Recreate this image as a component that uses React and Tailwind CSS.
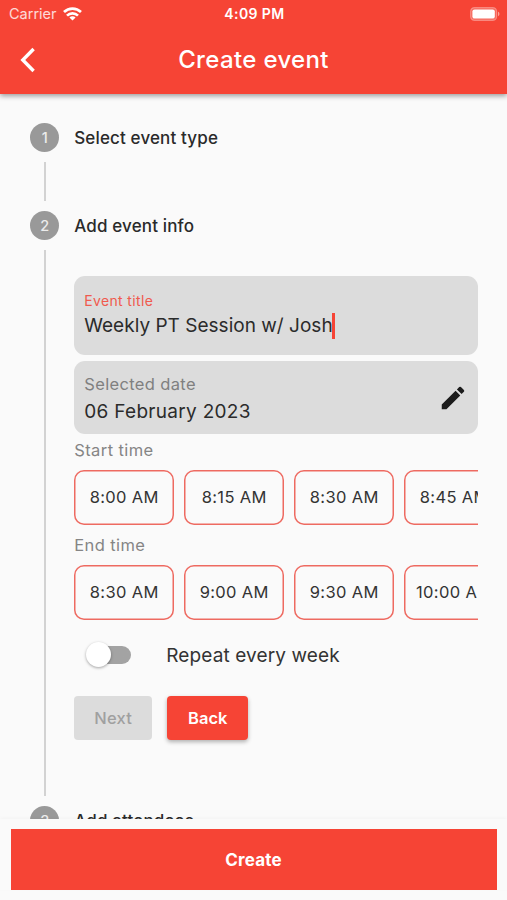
import { useState } from 'react'

const START_TIMES = ['8:00 AM', '8:15 AM', '8:30 AM', '8:45 AM']
const END_TIMES = ['8:30 AM', '9:00 AM', '9:30 AM', '10:00 AM']

function StatusBar() {
  return (
    <div className="grid h-[27px] grid-cols-3 items-center pr-[7px] pl-[9px] text-white">
      <div className="flex items-center gap-[6px]">
        <span className="text-[14.5px] text-white/80">Carrier</span>
        <svg width="19" height="14" viewBox="0 0 19 14" fill="none" stroke="currentColor" strokeWidth="2.7">
          <path d="M1 5C5.8 .4 13.2 .4 18 5" />
          <path d="M4 8.6C7 5.7 12 5.7 15 8.6" />
          <path d="M9.5 13.5L6.4 10.5C8.1 8.9 10.9 8.9 12.6 10.5Z" fill="currentColor" stroke="none" />
        </svg>
      </div>
      <span className="text-center text-[14px] font-semibold tracking-[0.4px]">4:09 PM</span>
      <svg className="justify-self-end" width="30" height="14" viewBox="0 0 30 14">
        <rect x=".6" y=".6" width="26" height="12.8" rx="3.8" fill="white" fillOpacity=".2" stroke="white" strokeOpacity=".3" strokeWidth="1.2" />
        <rect x="2.4" y="2.4" width="22.4" height="9.2" rx="2.2" fill="white" />
        <path d="M28 4.8C29.9 5.4 29.9 8.6 28 9.2Z" fill="white" fillOpacity=".5" />
      </svg>
    </div>
  )
}

function Header() {
  return (
    <header className="relative z-10 h-[94px] shrink-0 bg-[#f64435] shadow-[0_2px_5px_rgba(0,0,0,0.38)]">
      <StatusBar />
      <div className="grid h-[66px] grid-cols-[60px_1fr_60px] items-center">
        <button className="pl-[20px] text-white" aria-label="Go back">
          <svg width="16" height="26" viewBox="0 0 16 26" fill="none" stroke="currentColor" strokeWidth="3.4">
            <path d="M13.6 2L2.8 13L13.6 24" />
          </svg>
        </button>
        <h1 className="text-center text-[24px] font-medium tracking-[0.35px] text-white">Create event</h1>
      </div>
    </header>
  )
}

function Step({ number, title, lineClass, children }) {
  return (
    <section className="flex gap-[15px]">
      <div className="flex w-[29px] shrink-0 flex-col items-center">
        <span className="flex size-[29px] shrink-0 justify-center rounded-full bg-[#999] text-[14.5px] leading-[29px] font-medium text-[#ececec]">
          {number}
        </span>
        <span className={`my-[10px] ml-px w-[2px] shrink-0 bg-[#d2d2d2] ${lineClass}`} />
      </div>
      <div className="min-w-0 flex-1">
        <h2 className="h-[29px] pt-px text-[17px] leading-[29px] font-medium tracking-[0.14px] text-[#2a2a2a]">{title}</h2>
        {children}
      </div>
    </section>
  )
}

function TimeRow({ label, times }) {
  return (
    <div>
      <p className="h-[35px] pt-[3px] text-[16.5px] leading-[24px] tracking-[0.4px] text-[#858585]">{label}</p>
      <div className="flex gap-[10px] overflow-hidden">
        {times.map((time) => (
          <button
            key={time}
            className="h-[55px] w-[100px] shrink-0 rounded-[10px] text-[16.5px] tracking-[0.35px] whitespace-nowrap text-[#333] shadow-[inset_0_0_0_1.5px_#ee6a61]"
          >
            {time}
          </button>
        ))}
      </div>
    </div>
  )
}

function EventForm() {
  const [repeat, setRepeat] = useState(false)

  return (
    <div className="pt-[36px]">
      <div className="h-[79px] rounded-[11px] bg-[#dcdcdc] px-[10px] pt-[16px]">
        <p className="text-[14px] leading-[18px] tracking-[0.35px] text-[#f05a4e]">Event title</p>
        <p className="flex items-center pt-px text-[19px] leading-[30px] tracking-[0.02px] text-[#2b2b2b]">
          Weekly PT Session w/ Josh
          <span className="-ml-px h-[26px] w-[3px] bg-[#f64435]" />
        </p>
      </div>
      <div className="mt-[6px] flex h-[73px] items-center justify-between rounded-[11px] bg-[#dcdcdc] pr-[10px] pl-[10px]">
        <div>
          <p className="text-[16.5px] leading-[27px] tracking-[0.35px] text-[#808080]">Selected date</p>
          <p className="text-[19px] leading-[27px] tracking-[0.3px] text-[#2b2b2b]">06 February 2023</p>
        </div>
        <svg width="30" height="30" viewBox="0 0 24 24" fill="#1c1c1c">
          <path d="M3 17.250V21h3.750L17.810 9.940l-3.750-3.750L3 17.250zM20.710 7.040a1 1 0 0 0 0-1.410l-2.340-2.340a1 1 0 0 0-1.410 0l-1.830 1.830 3.750 3.750 1.830-1.830z" />
        </svg>
      </div>
      <div className="mt-[1px] flex flex-col gap-[5px]">
        <TimeRow label="Start time" times={START_TIMES} />
        <TimeRow label="End time" times={END_TIMES} />
      </div>
      <div className="mt-[22px] flex h-[26px] items-center gap-[35px] pl-[12px]">
        <button
          role="switch"
          aria-checked={repeat}
          aria-label="Repeat every week"
          onClick={() => setRepeat(!repeat)}
          className="flex h-[18px] w-[45px] items-center rounded-full bg-linear-to-r from-transparent from-20% to-[#a3a3a3] to-20%"
        >
          <span
            className={`mb-px size-[25px] rounded-full bg-white shadow-[0_1px_3px_rgba(0,0,0,0.35)] ${repeat ? 'translate-x-[20px]' : ''}`}
          />
        </button>
        <span className="pt-[2px] text-[19px] tracking-[0.12px] text-[#333]">Repeat every week</span>
      </div>
      <div className="mt-[28px] flex gap-[15px]">
        <button className="h-[44px] w-[78px] rounded-[4px] bg-[#dcdcdc] text-[16.5px] font-medium tracking-[0.25px] text-[#a0a0a0]" disabled>
          Next
        </button>
        <button className="h-[44px] w-[81px] rounded-[4px] bg-[#f64435] text-[16.5px] font-semibold text-white shadow-[0_2px_4px_rgba(0,0,0,0.3)]">
          Back
        </button>
      </div>
    </div>
  )
}

export default function App() {
  return (
    <div className="flex h-[900px] w-[507px] flex-col overflow-hidden bg-[#fafafa] font-['Inter',sans-serif]">
      <Header />
      <main className="h-[725px] shrink-0 overflow-hidden pt-[29px] pr-[29.5px] pl-[30.25px]">
        <Step number={1} title="Select event type" lineClass="h-[39px]" />
        <Step number={2} title="Add event info" lineClass="h-[546px]">
          <EventForm />
        </Step>
        <Step number={3} title="Add attendees" lineClass="h-[39px]" />
      </main>
      <footer className="px-[10.5px] pt-[10px] shadow-[0_-1px_4px_rgba(0,0,0,0.03)]">
        <button className="h-[61px] w-full bg-[#f64435] pt-[2px] text-[17px] font-bold tracking-[0.2px] text-white">Create</button>
      </footer>
    </div>
  )
}
